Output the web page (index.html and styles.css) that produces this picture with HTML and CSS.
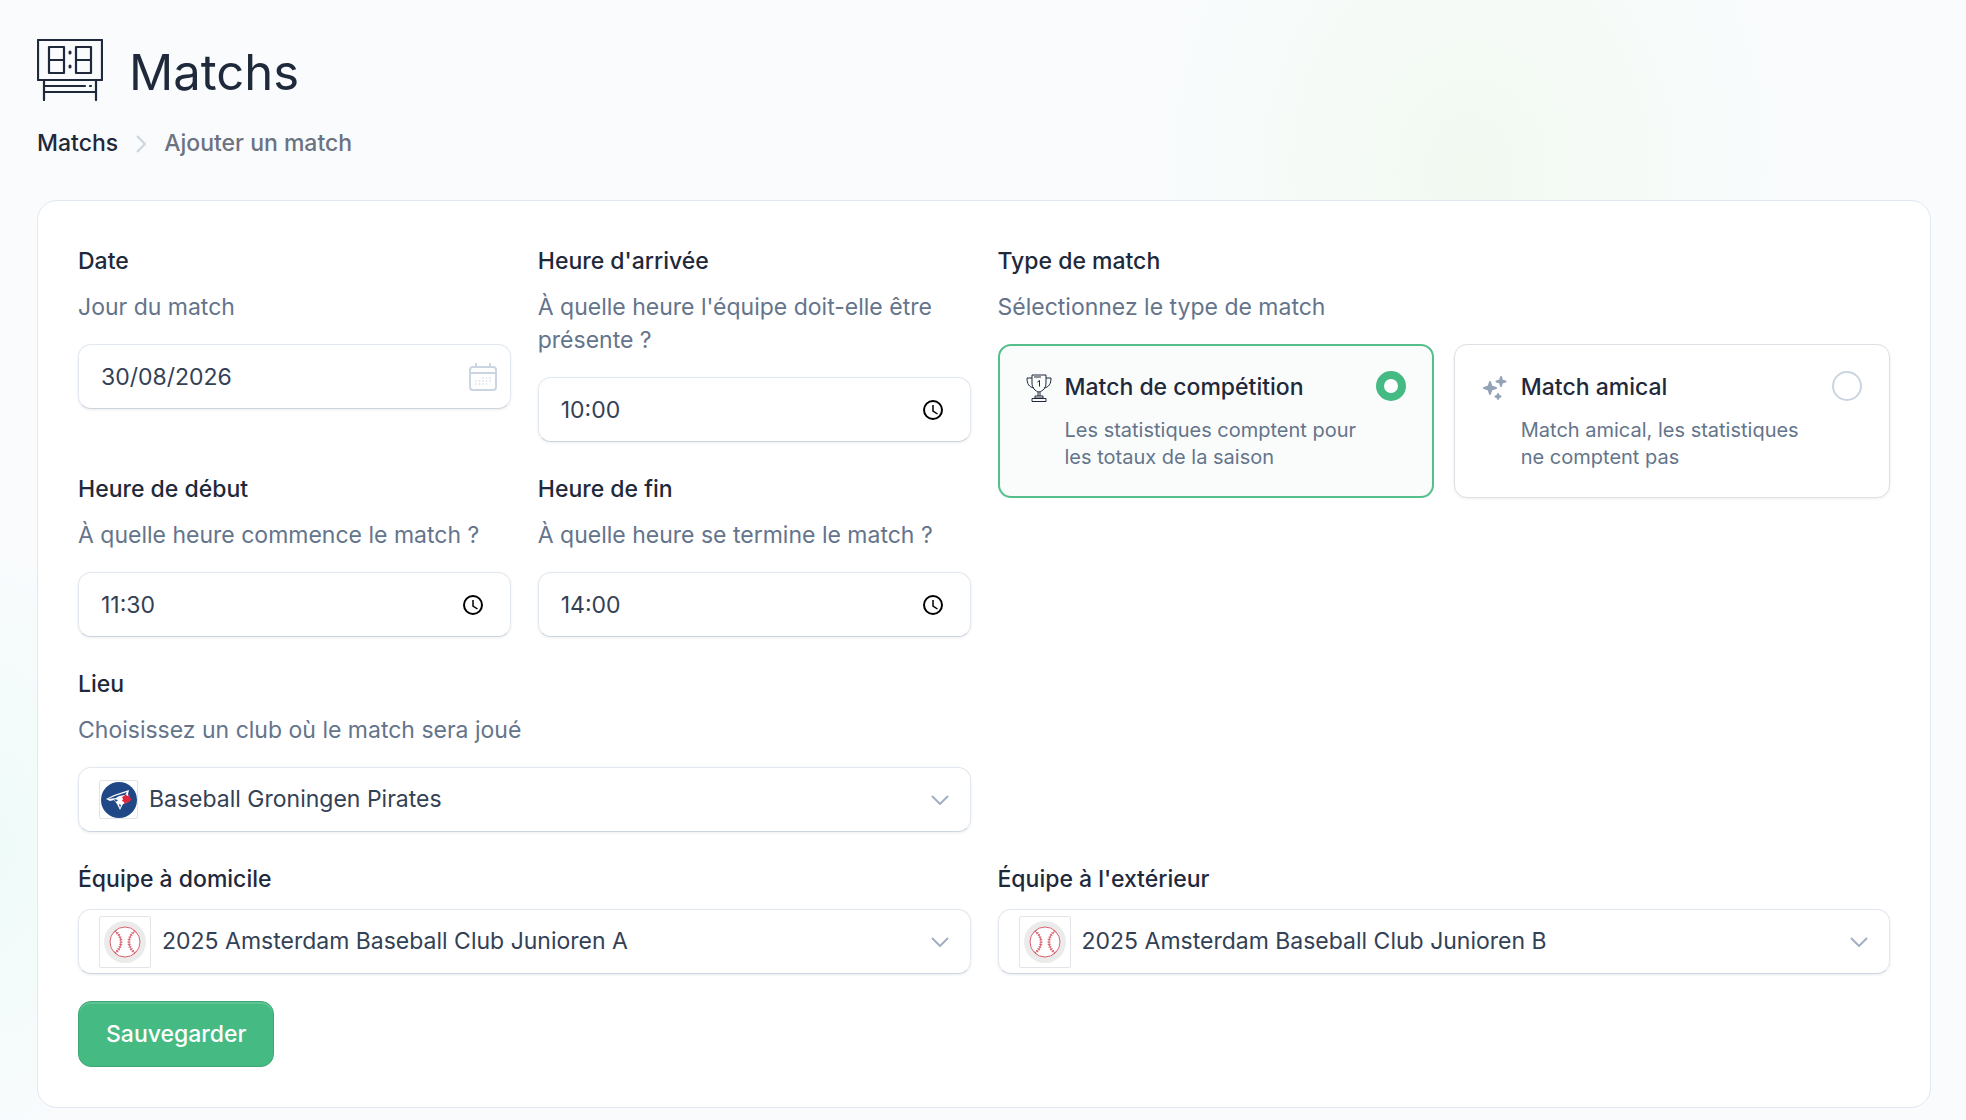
FILE: index.html
```
<!DOCTYPE html>
<html lang="fr">
<head>
    <meta charset="UTF-8">
    <meta name="viewport" content="width=device-width, initial-scale=1.0">
    <title>Matchs - Ajouter un match</title>
    <link rel="stylesheet" href="styles.css">
</head>
<body>
    <header class="page-header">
        <svg class="page-icon" viewBox="0 0 66 62" fill="none" stroke="currentColor" stroke-width="2.200" stroke-linecap="round" stroke-linejoin="round" aria-hidden="true">
            <path d="M1 1h64v40H1zM7 41v20M59 41v20M7 47h41M53 47h1M7 53h52"/>
            <path d="M12 8h15v26H12zM12 21h15M39 8h15v26H39zM39 21h15"/>
            <path d="M33 13v1M33 27v1" stroke-width="3"/>
        </svg>
        <h1>Matchs</h1>
    </header>

    <nav class="breadcrumb" aria-label="Fil d'Ariane">
        <a href="#">Matchs</a>
        <svg class="breadcrumb-sep" viewBox="0 0 10 18" fill="none" stroke="currentColor" stroke-width="2" aria-hidden="true"><path d="M1 1l8 8-8 8"/></svg>
        <span>Ajouter un match</span>
    </nav>

    <main class="card">
        <form class="form-grid">
            <div class="schedule">
                <div class="field">
                    <label for="date">Date</label>
                    <p class="help">Jour du match</p>
                    <div class="control">
                        <input type="text" id="date" value="30/08/2026">
                        <svg class="icon-calendar" viewBox="0 0 28 28" fill="none" stroke="currentColor" stroke-width="2" stroke-linecap="round" aria-hidden="true">
                            <rect x="1" y="4" width="26" height="23" rx="3"/>
                            <path d="M7 1v3M21 1v3M1 10h26"/>
                            <path d="M14 15h8M7 18h15M7 21h11" stroke-width="1.500" stroke-dasharray="0 3.500"/>
                        </svg>
                    </div>
                </div>

                <div class="field">
                    <label for="arrivee">Heure d'arrivée</label>
                    <p class="help">À quelle heure l'équipe doit-elle être présente ?</p>
                    <div class="control">
                        <input type="text" id="arrivee" value="10:00">
                        <svg class="icon-clock" viewBox="0 0 20 20" fill="none" stroke="currentColor" stroke-width="2" aria-hidden="true"><circle cx="10" cy="10" r="9"/><path d="M10 5v6l4.500 3" stroke-width="1.500"/></svg>
                    </div>
                </div>

                <div class="field">
                    <label for="debut">Heure de début</label>
                    <p class="help">À quelle heure commence le match ?</p>
                    <div class="control">
                        <input type="text" id="debut" value="11:30">
                        <svg class="icon-clock" viewBox="0 0 20 20" fill="none" stroke="currentColor" stroke-width="2" aria-hidden="true"><circle cx="10" cy="10" r="9"/><path d="M10 5v6l4.500 3" stroke-width="1.500"/></svg>
                    </div>
                </div>

                <div class="field">
                    <label for="fin">Heure de fin</label>
                    <p class="help">À quelle heure se termine le match ?</p>
                    <div class="control">
                        <input type="text" id="fin" value="14:00">
                        <svg class="icon-clock" viewBox="0 0 20 20" fill="none" stroke="currentColor" stroke-width="2" aria-hidden="true"><circle cx="10" cy="10" r="9"/><path d="M10 5v6l4.500 3" stroke-width="1.500"/></svg>
                    </div>
                </div>

                <div class="field field-wide">
                    <label for="lieu">Lieu</label>
                    <p class="help">Choisissez un club où le match sera joué</p>
                    <div class="control">
                        <span class="logo logo-club">
                            <svg viewBox="0 0 36 36" aria-hidden="true">
                                <circle cx="18" cy="18" r="18" fill="#204886"/>
                                <path d="M5 17l8-4 6-2 9-3-1 4 1 3-1 5-5 2-3 6-3-6-3-4-4 1z" fill="#fff"/>
                                <path d="M7 17l7-3 12-4-2 3-6 1-3 2z" fill="#204886"/>
                                <path d="M13 17l4 1-2 2zM18 22l2 1-1 3z" fill="#204886"/>
                                <path d="M21 15l2-1 2-2 1 2 3-1v3l2 1-3 3-3 1-1 2-1-3-2-1 1-2z" fill="#e0263c"/>
                            </svg>
                        </span>
                        <select id="lieu" class="select-club">
                            <option>Baseball Groningen Pirates</option>
                        </select>
                        <svg class="icon-chevron" viewBox="0 0 18 10" fill="none" stroke="currentColor" stroke-width="2" aria-hidden="true"><path d="M1 1l8 8 8-8"/></svg>
                    </div>
                </div>
            </div>

            <fieldset class="match-type">
                <legend>Type de match</legend>
                <p class="help">Sélectionnez le type de match</p>
                <div class="options">
                    <label class="option">
                        <svg class="option-icon trophy" viewBox="0 0 26 28" fill="none" stroke="currentColor" stroke-linejoin="round" aria-hidden="true">
                            <path d="M6 1h14v8c0 5-3 8-7 9-4-1-7-4-7-9zM6 4H1c0 6 2 9 7 10M20 4h5c0 6-2 9-7 10M12 18v4M14 18v4M9 22h8v2H9zM6 24.500h14v3H6z"/>
                            <path d="M8 3h7M11.500 8l2-1.500v6"/>
                        </svg>
                        <span class="option-text">
                            <span class="option-title">Match de compétition</span>
                            <span class="option-help">Les statistiques comptent pour les totaux de la saison</span>
                        </span>
                        <input type="radio" name="type" value="competition" checked>
                    </label>
                    <label class="option">
                        <svg class="option-icon sparkles" viewBox="0 0 26 28" fill="currentColor" stroke="currentColor" stroke-linejoin="round" aria-hidden="true">
                            <path d="M8 8l1.500 4.500L14 14l-4.500 1.500L8 20l-1.500-4.500L2 14l4.500-1.500zM19 3l1 3.500 3.500 1-3.500 1-1 3.500-1-3.500-3.500-1 3.500-1zM16 20l.7 1.800 1.800.7-1.800.7-.7 1.800-.7-1.800-1.800-.7 1.800-.7z" stroke-width="2"/>
                        </svg>
                        <span class="option-text">
                            <span class="option-title">Match amical</span>
                            <span class="option-help">Match amical, les statistiques ne comptent pas</span>
                        </span>
                        <input type="radio" name="type" value="amical">
                    </label>
                </div>
            </fieldset>

            <div class="field">
                <label for="domicile">Équipe à domicile</label>
                <div class="control">
                    <span class="logo logo-team">
                        <svg viewBox="0 0 42 42" fill="none" aria-hidden="true">
                            <circle cx="21" cy="21" r="21" fill="#ebebeb"/>
                            <circle cx="21" cy="21" r="15" fill="#fff" stroke="#d9626f"/>
                            <path d="M11 10c8 6 8 16 0 22M31 10c-8 6-8 16 0 22" stroke="#d9626f"/>
                            <path d="M11 10c8 6 8 16 0 22M31 10c-8 6-8 16 0 22" stroke="#d9626f" stroke-width="3" stroke-dasharray="1 1.500"/>
                        </svg>
                    </span>
                    <select id="domicile" class="select-team">
                        <option>2025 Amsterdam Baseball Club Junioren A</option>
                    </select>
                    <svg class="icon-chevron" viewBox="0 0 18 10" fill="none" stroke="currentColor" stroke-width="2" aria-hidden="true"><path d="M1 1l8 8 8-8"/></svg>
                </div>
            </div>

            <div class="field">
                <label for="exterieur">Équipe à l'extérieur</label>
                <div class="control">
                    <span class="logo logo-team">
                        <svg viewBox="0 0 42 42" fill="none" aria-hidden="true">
                            <circle cx="21" cy="21" r="21" fill="#ebebeb"/>
                            <circle cx="21" cy="21" r="15" fill="#fff" stroke="#d9626f"/>
                            <path d="M11 10c8 6 8 16 0 22M31 10c-8 6-8 16 0 22" stroke="#d9626f"/>
                            <path d="M11 10c8 6 8 16 0 22M31 10c-8 6-8 16 0 22" stroke="#d9626f" stroke-width="3" stroke-dasharray="1 1.500"/>
                        </svg>
                    </span>
                    <select id="exterieur" class="select-team">
                        <option>2025 Amsterdam Baseball Club Junioren B</option>
                    </select>
                    <svg class="icon-chevron" viewBox="0 0 18 10" fill="none" stroke="currentColor" stroke-width="2" aria-hidden="true"><path d="M1 1l8 8 8-8"/></svg>
                </div>
            </div>

            <div class="actions">
                <button type="submit">Sauvegarder</button>
            </div>
        </form>
    </main>
</body>
</html>
```
FILE: styles.css
```
* {
    box-sizing: border-box;
}
body {
    margin: 0;
    padding: 36px 35px 12px 37px;
    min-height: 100vh;
    font-family: Inter, "Liberation Sans", sans-serif;
    font-size: 23px;
    line-height: 33px;
    color: #1e293b;
    background-color: #f9fbfd;
    background-image:
        radial-gradient(ellipse 340px 420px at 1470px 170px, #f2f9f1, rgba(242, 249, 241, 0)),
        radial-gradient(ellipse 130px 300px at 0 850px, #effbf9, rgba(239, 251, 249, 0));
}
h1, p {
    margin: 0;
}
.page-header {
    display: flex;
    align-items: flex-start;
    gap: 26px;
}
.page-icon {
    width: 66px;
    height: 62px;
    margin-top: 3px;
}
h1 {
    font-size: 49px;
    font-weight: 400;
    line-height: 74px;
}
.breadcrumb {
    display: flex;
    align-items: center;
    gap: 18px;
    margin: 17px 0 40px;
    font-weight: 500;
    color: #6b7280;
}
.breadcrumb a {
    color: #1e293b;
    text-decoration: none;
}
.breadcrumb-sep {
    width: 10px;
    height: 18px;
    color: #cbd5e1;
}
.card {
    padding: 40px;
    border: 1px solid #e2e8f0;
    border-radius: 20px;
    background-color: #fff;
}
.form-grid, .schedule {
    display: grid;
    grid-template-columns: 1fr 1fr;
    gap: 27px;
}
.schedule {
    align-content: start;
}
.field-wide {
    grid-column: span 2;
}
.field > label, legend {
    display: block;
    padding: 4px 0 0;
    font-weight: 500;
}
.help {
    margin: 13px 0 20px;
    color: #64748b;
}
.control {
    position: relative;
    margin-top: 13px;
}
.control input, .control select {
    display: block;
    width: 100%;
    height: 65px;
    padding: 0 22px;
    font: inherit;
    color: #334155;
    appearance: none;
    background-color: #fff;
    border: 1px solid #e2e8f0;
    border-bottom-color: #cbd5e1;
    border-radius: 13px;
    box-shadow: 0 1px 3px rgba(15, 23, 42, 0.08);
}
.help + .control {
    margin-top: 0;
}
.control .select-club {
    padding-left: 70px;
}
.control .select-team {
    padding-left: 83px;
}

/* Icônes posées sur les champs */
.icon-calendar, .icon-clock, .icon-chevron, .logo {
    position: absolute;
    top: 0;
    bottom: 0;
    margin: auto 0;
    pointer-events: none;
}
.icon-calendar {
    right: 14px;
    width: 28px;
    height: 28px;
    color: #cbd5e1;
}
.icon-clock {
    right: 28px;
    width: 20px;
    height: 20px;
    color: #000;
}
.icon-chevron {
    right: 22px;
    width: 18px;
    height: 10px;
    color: #a3afc2;
}
.logo {
    left: 21px;
    display: flex;
    align-items: center;
    justify-content: center;
    border: 1px solid #e2e4ea;
    border-radius: 2px;
    background-color: #fff;
}
.logo-club {
    width: 39px;
    height: 39px;
}
.logo-club svg {
    width: 36px;
}
.logo-team {
    width: 52px;
    height: 52px;
}
.logo-team svg {
    width: 42px;
}

/* Type de match */
.match-type {
    min-width: 0;
    margin: 0;
    padding: 0;
    border: 0;
}
.options {
    display: grid;
    grid-template-columns: 1fr 1fr;
    gap: 20px;
}
.option {
    display: flex;
    align-items: flex-start;
    padding: 26px 27px;
    border: 1px solid #dcdfe4;
    border-radius: 13px;
    box-shadow: 0 1px 3px rgba(15, 23, 42, 0.08);
}
.option:has(:checked) {
    border: 2px solid #55bf8c;
    padding: 25px 26px;
    background-color: #fafcfb;
    box-shadow: none;
}
.option-icon {
    flex: none;
    width: 26px;
    height: 28px;
    margin-top: 3px;
}
.sparkles {
    color: #94a3b8;
}
.option-text {
    flex: 1;
    margin-left: 13px;
    padding-right: 12px;
}
.option-title, .option-help {
    display: block;
}
.option-title {
    font-weight: 500;
}
.option-help {
    margin-top: 13px;
    font-size: 20px;
    line-height: 27px;
    color: #64748b;
}
.option input {
    flex: none;
    width: 30px;
    height: 30px;
    margin: 0;
    appearance: none;
    background-color: #fff;
    border: 2px solid #cbd5e1;
    border-radius: 50%;
}
.option input:checked {
    border: 8px solid #45ba82;
}

button {
    height: 66px;
    padding: 0 27px;
    font: inherit;
    font-weight: 500;
    color: #fff;
    background-color: #45ba82;
    border: 1px solid #3da674;
    border-radius: 13px;
    box-shadow: inset 0 2px 0 rgba(255, 255, 255, 0.15);
}
.actions {
    grid-column: span 2;
    display: flex;
}
```
